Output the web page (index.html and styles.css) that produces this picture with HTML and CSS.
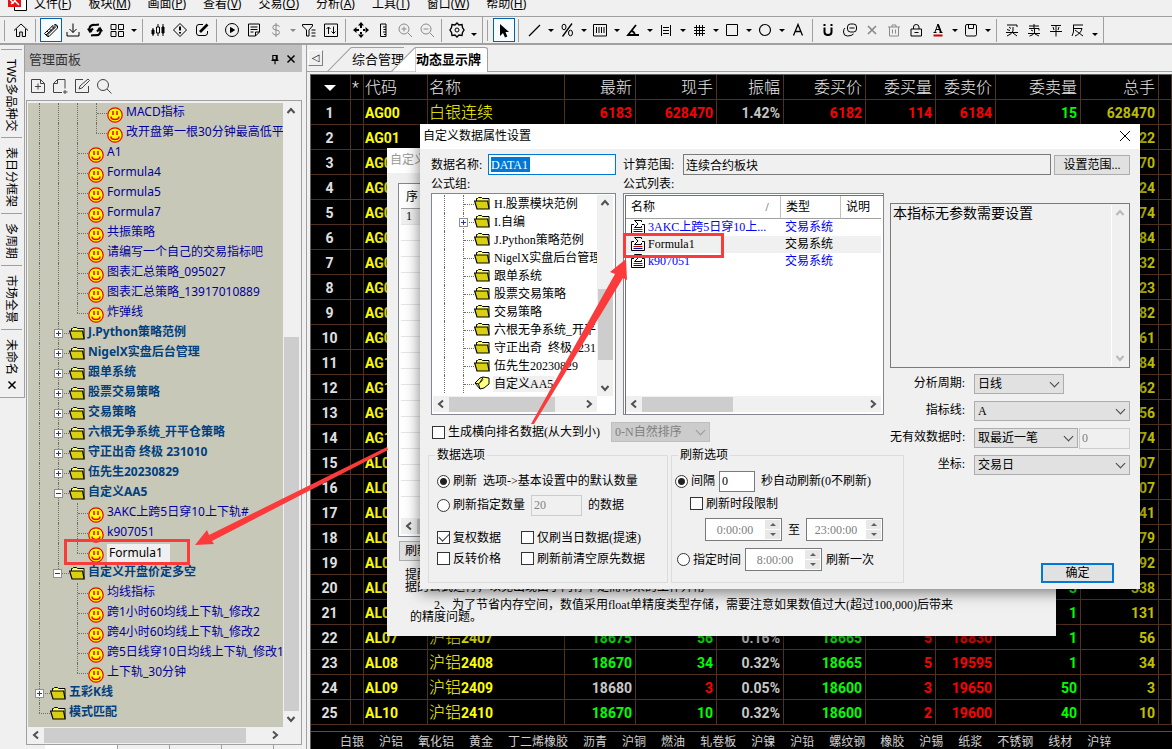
FILE: index.html
```html
<!DOCTYPE html>
<html lang="zh-CN">
<head>
    <meta charset="UTF-8">
    <meta name="viewport" content="width=device-width, initial-scale=1.0">
    <title>动态显示牌</title>
    <link rel="stylesheet" href="styles.css">
</head>
<body>
    <!-- Icon sprite -->
    <svg class="sprite" xmlns="http://www.w3.org/2000/svg">
        <symbol id="home" viewBox="0 0 16 16"><path d="M1 8.500 8 2l7 6.500M3.500 7v7.500h3.200V10h2.600v4.500h3.200V7"/></symbol>
        <symbol id="link" viewBox="0 0 16 16"><path d="M1.500 11.500 10 3.500l1.500 1.500L3 13zM5 14.500V12.500L13 4.500V2.500L14.500 4v2L6 14.500zM3 13l2 1.500M11 3l2-.5M4 9l2 2M6.500 7l2 2M9 4.500l2 2"/></symbol>
        <symbol id="download" viewBox="0 0 16 16"><path d="M8 1.500v9M4.500 7 8 10.500 11.500 7M2 10v4h12v-4"/></symbol>
        <symbol id="refresh" viewBox="0 0 16 16"><path stroke-width="2.200" d="M8 3C4 2 2 5 2.500 8L5 9.500M1 6.500l2 3 3-3M8 13c4 1 6-2 5.500-5L11 6.500M15 9.500l-2-3-3 3M8 3l4-.5M8 13l-4 .5"/></symbol>
        <symbol id="grid" viewBox="0 0 16 16"><path d="M2 2.500h5v5H2zM9.500 2.500h5v5h-5zM2 9.500h5v5H2zM9.500 9.500h5v5h-5z"/></symbol>
        <symbol id="candles" viewBox="0 0 16 16"><path d="M3 6v8M8 2v12M13 2v12"/><path fill="currentColor" d="M2 8h2v4H2zM12 5h2v6h-2z"/><path fill="#f0f0f0" d="M6.500 5h3v6h-3z"/></symbol>
        <symbol id="alert" viewBox="0 0 16 16"><path d="M8 1.500 14.500 8 8 14.500 1.500 8z"/><path stroke-width="2" d="M8 4.500v4M8 10v1.500"/></symbol>
        <symbol id="edit" viewBox="0 0 16 16"><path d="M9 2.500H5Q2.500 2.500 2.500 5v6q0 2.500 2.500 2.500h6q2.500 0 2.500-2.500V9"/><path stroke-width="2.600" d="m6 10 7.500-7.500"/></symbol>
        <symbol id="play" viewBox="0 0 16 16"><circle cx="8" cy="8" r="6.500"/><path fill="currentColor" d="m6.500 5.500 4 2.500-4 2.500z"/></symbol>
        <symbol id="note" viewBox="0 0 16 16"><path d="M2.500 2h11v8l-4 4h-7zM13.500 10h-4v4M4.500 5h7M4.500 7.500h7M4.500 10h3"/></symbol>
        <symbol id="dollar" viewBox="0 0 16 16"><path d="M8 1v14M11.500 5Q11 3 8 3 4.800 3 4.800 5.300 4.800 8 8 8q3.500 0 3.500 2.500T8 13q-3.200 0-3.500-2.500"/></symbol>
        <symbol id="filter" viewBox="0 0 16 16"><path d="M1.500 2.500h10v1.500L8 8v6H5.500V8l-4-4zM10.500 8h4M10.500 11h4M10.500 14h4"/></symbol>
        <symbol id="swap" viewBox="0 0 16 16"><path d="M1.500 2h13v12.500h-13zM5.500 12V5M3.500 7l2-2 2 2M10.500 4.500v7M8.500 9.500l2 2 2-2"/></symbol>
        <symbol id="move" viewBox="0 0 16 16"><path fill="currentColor" stroke="none" d="m8 0 3 3.500H5zM8 16l3-3.500H5zM0 8l3.500-3v6zM16 8l-3.500-3v6zM7 3h2v3H7zM7 10h2v3H7zM3 7h3v2H3zM10 7h3v2h-3z"/></symbol>
        <symbol id="ruler" viewBox="0 0 16 16"><path d="M5.500 2h5.500v12.500H5.500zM11 5H8M11 7.500H8.500M11 10H8M11 12.500H9"/></symbol>
        <symbol id="zoomin" viewBox="0 0 16 16"><circle cx="7" cy="7" r="5"/><path d="m11 11 4 4M4.500 7h5M7 4.500v5"/></symbol>
        <symbol id="zoomout" viewBox="0 0 16 16"><circle cx="7" cy="7" r="5"/><path d="m11 11 4 4M4.500 7h5"/></symbol>
        <symbol id="gear" viewBox="0 0 16 16"><path stroke-width="1.400" d="m8 1 2 2 3-.5.5 3L15 8l-1.500 2.500-.5 3-3-.5-2 2-2-2-3 .5-.5-3L1 8l1.500-2.500.5-3 3 .5z"/><circle cx="8" cy="8" r="2"/></symbol>
        <symbol id="cursor" viewBox="0 0 16 16"><path fill="currentColor" stroke="none" d="M4 2v12l3-3 2 4.500 2.300-1L9.500 10H13z"/></symbol>
        <symbol id="line" viewBox="0 0 16 16"><path stroke-width="1.300" d="M3 14 14 3"/></symbol>
        <symbol id="percent" viewBox="0 0 16 16"><path stroke-width="1.300" d="M3.500 14.500 13 1.500"/><ellipse cx="5" cy="5" rx="2" ry="2.800"/><ellipse cx="11.500" cy="11" rx="2" ry="2.800"/></symbol>
        <symbol id="bars" viewBox="0 0 16 16"><path d="M1.500 2.500h13v11.500h-13zM4.500 5v6M7 5v6M9.500 5v6M12 5v6"/></symbol>
        <symbol id="angle" viewBox="0 0 16 16"><path stroke-width="1.800" d="M11 3 3 13h11M6 9q3 0 4 4"/></symbol>
        <symbol id="spread" viewBox="0 0 16 16"><path d="M3.500 3v11M12.500 3v11M5 5.500h6M5 8.500h6M5 11.500h6"/></symbol>
        <symbol id="hash" viewBox="0 0 16 16"><path d="M5.500 3v11M8.500 3v11M11.500 3v11M3 5.500h11M3 8.500h11M3 11.500h11"/></symbol>
        <symbol id="rect" viewBox="0 0 16 16"><path d="M2.500 2.500h11v11h-11z"/></symbol>
        <symbol id="circle" viewBox="0 0 16 16"><circle cx="8" cy="8" r="5.500" stroke-width="1.200"/></symbol>
        <symbol id="lettera" viewBox="0 0 16 16"><path stroke-width="1.300" d="M3.500 13.500 8 2.500l4.500 11M5 9.500h6"/></symbol>
        <symbol id="magnet" viewBox="0 0 16 16"><path stroke-width="2" d="M4.500 5.500V10q0 3 3.500 3t3.500-3V5.500M4.500 2v2M11.500 2v2"/></symbol>
        <symbol id="copy" viewBox="0 0 16 16"><rect x="5.500" y="2" width="9" height="8" rx="3"/><path d="M3 6q-1.500 1-1.500 4 0 4 4 4 4 0 6-2M7.500 6h5"/></symbol>
        <symbol id="cross" viewBox="0 0 16 16"><path stroke-width="1.700" d="m4 4 8 8M12 4l-8 8"/></symbol>
        <symbol id="trash" viewBox="0 0 16 16"><path d="M2 5h12M6 5V3h4v2M3.500 5v9h9V5M6.500 7.500v4M9.500 7.500v4"/></symbol>
        <symbol id="lock" viewBox="0 0 16 16"><path d="M3 7h10.500v7H3zM5.500 7V5q0-2.500 2.700-2.500T11 5v2M6.500 10.500h4"/></symbol>
        <symbol id="fontcolor" viewBox="0 0 16 16"><path d="M5 10 8 2l3 8M6 7.500h4M3.500 10.500h3M9.500 10.500h3"/><path stroke-width="1.800" d="m8 2.500 3 8"/><path stroke="#d00000" stroke-width="2" d="M3.500 13.500h9"/></symbol>
        <symbol id="save" viewBox="0 0 16 16"><rect x="2.500" y="2.500" width="11" height="11.500" rx="1.500"/><path d="M5.500 3v3.500h5V3"/></symbol>
        <symbol id="buy" viewBox="0 0 16 16"><path d="M3 3h10v2M5 5l2 1.500M3 7.500l3 1M2 10.500h12M9 5v4q-1 3-6 5M9 11l4 3"/></symbol>
        <symbol id="sell" viewBox="0 0 16 16"><path d="M3 4h10M8 2v4M3 6.500h10v2M5 8l2 1M2 11.500h12M8.500 7v4q-1 2-5 3M9 12l4 2"/></symbol>
        <symbol id="even" viewBox="0 0 16 16"><path d="M3 3.500h10M5 5l1 3M11 5l-1 3M2 9.500h12M8 3.500v11"/></symbol>
        <symbol id="reverse" viewBox="0 0 16 16"><path d="M3 3h10M3.500 3v7L2 14M4 6.500h8q-1 5-7 7.500M5 8l8 6"/></symbol>
        <symbol id="newfile" viewBox="0 0 16 16"><path d="M1.500 1.500h9l4 4v9h-13zM10.500 1.500v4h4M8 5.500v6M5 8.500h6"/></symbol>
        <symbol id="addfile" viewBox="0 0 16 16"><path d="M10 14.500H1.500v-9l4-4H13v9M5.500 1.500v4h-4M13 12v4M11 14h4.500"/></symbol>
        <symbol id="editfile" viewBox="0 0 16 16"><path d="M9 1.500H1.500v13h13V8M5 11l1-3 8-7 1.500 1.500L8 10z"/></symbol>
        <symbol id="search" viewBox="0 0 16 16"><circle cx="7" cy="7" r="5.500"/><path d="m11 11 4.500 4.500"/></symbol>
        <symbol id="pin" viewBox="0 0 16 16"><path stroke-width="1.300" d="M5.500 4h5v5h-5zM4 9.500h8M8 10v4M9.500 4v5"/></symbol>
        <symbol id="chev" viewBox="0 0 16 16"><path d="m4.500 10 3.500-4 3.500 4"/></symbol>
        <symbol id="smile" viewBox="0 0 16 16"><circle cx="8" cy="8" r="7.200" fill="#ffff00" stroke="#f00000" stroke-width="1.200"/><path stroke="#f00000" stroke-width="1.500" d="M6 4v4M10 4v4M4 9.500q0 3 4 3t4-3"/></symbol>
        <symbol id="folder" viewBox="0 0 16 16"><path fill="#ffff66" stroke="#000" d="M2.500 6V3.500h1l1-1h3l1 1h6.500v10"/><path fill="#d8d010" stroke="#000" stroke-width="1.200" d="M.6 6h13l1.500 8H3z"/></symbol>
        <symbol id="folderopen" viewBox="0 0 16 16"><path fill="#ffff80" stroke="#000" d="M1 8 6 3l3-1 6 1v6l-5 4-4 1zM6 14 4.500 9 9 4.500M4.500 9 1 8M9 2.500l-3 5"/></symbol>
        <symbol id="sigma" viewBox="0 0 16 16"><path fill="#fff" stroke="#000" d="M4 5.500H1.500v9h13v-9H12"/><path stroke="#000" d="M11.500 3V1.500h-7L8 5 4.500 8.500h7V7"/><path stroke="#c00000" d="M3.500 10.500h9"/><path stroke="#0000a0" d="M3.500 12.500h9"/></symbol>
    </svg>

    <div class="app">
        <nav class="menubar">
            <svg class="app-logo" viewBox="0 0 20 12"><path fill="#fff" stroke="#000" d="M6.500-2h12v12.500h-12z"/><path fill="#e81010" d="M0-3h13v10H0z"/><path stroke="#fff" stroke-width="1.500" d="m2-1 3 4 3-4M3 4l4-3 4 4"/></svg>
            <a href="#">文件(<u>F</u>)</a>
            <a href="#">板块(<u>M</u>)</a>
            <a href="#">画面(<u>P</u>)</a>
            <a href="#">查看(<u>V</u>)</a>
            <a href="#">交易(<u>O</u>)</a>
            <a href="#">分析(<u>A</u>)</a>
            <a href="#">工具(<u>T</u>)</a>
            <a href="#">窗口(<u>W</u>)</a>
            <a href="#">帮助(<u>H</u>)</a>
        </nav>

        <div class="toolbars">
            <div class="toolbar" id="toolbarMain"></div>
            <div class="toolbar" id="toolbarDraw"></div>
        </div>

        <div class="workspace">
            <aside class="side-tabs">
                <a href="#">TWS多品种交</a>
                <a href="#">表日分框架</a>
                <a href="#">多周期</a>
                <a href="#">市场全景</a>
                <a href="#">未命名</a>
                <button class="side-close" aria-label="关闭"><svg><use href="#cross"/></svg></button>
            </aside>

            <section class="panel">
                <header class="panel-head">
                    <span>管理面板</span>
                    <button aria-label="固定"><svg><use href="#pin"/></svg></button>
                    <button aria-label="关闭"><svg><use href="#cross"/></svg></button>
                </header>
                <div class="panel-tools">
                    <button aria-label="新建"><svg><use href="#newfile"/></svg></button>
                    <button aria-label="添加"><svg><use href="#addfile"/></svg></button>
                    <button aria-label="编辑"><svg><use href="#editfile"/></svg></button>
                    <button aria-label="查找"><svg><use href="#search"/></svg></button>
                </div>
                <div class="scroll-frame panel-frame">
                    <div class="tree" id="tree"></div>
                    <div class="vbar"><svg><use href="#chev"/></svg><i class="thumb"></i><svg class="down"><use href="#chev"/></svg></div>
                    <div class="hbar"><svg class="left"><use href="#chev"/></svg><i class="thumb"></i><svg class="right"><use href="#chev"/></svg></div>
                </div>
                <div class="panel-tabs"><i class="on"></i><i></i><i></i><i></i></div>
            </section>

            <main class="mdi">
                <div class="mdi-tabs">
                    <button class="tab-prev" aria-label="向左"></button>
                    <a href="#" class="tab">
                        <svg viewBox="0 0 24 24" preserveAspectRatio="none"><path d="M0 24 22 1.500q1-1 2-1"/></svg>
                        <span>综合管理</span>
                    </a>
                    <a href="#" class="tab active">
                        <svg viewBox="0 0 24 24" preserveAspectRatio="none"><path d="M0 24 22 1.500q1-1 2-1V24z"/></svg>
                        <span>动态显示牌</span>
                    </a>
                </div>
                <div class="board">
                    <table class="quotes">
                        <colgroup>
                            <col class="c-no"><col class="c-star"><col class="c-code"><col class="c-name"><col class="c-last"><col class="c-vol"><col class="c-amp">
                            <col class="c-bid"><col class="c-bidv"><col class="c-ask"><col class="c-askv"><col class="c-total"><col>
                        </colgroup>
                        <thead>
                            <tr><th><i class="sort"></i></th><th class="l">*</th><th class="l">代码</th><th class="l">名称</th><th>最新</th><th>现手</th><th>振幅</th><th>委买价</th><th>委买量</th><th>委卖价</th><th>委卖量</th><th>总手</th><th></th></tr>
                        </thead>
                        <tbody id="quotes"></tbody>
                    </table>
                    <div class="ticker">
                        <a href="#">白银</a><a href="#">沪铝</a><a href="#">氧化铝</a><a href="#">黄金</a><a href="#">丁二烯橡胶</a><a href="#">沥青</a><a href="#">沪铜</a><a href="#">燃油</a><a href="#">轧卷板</a><a href="#">沪镍</a><a href="#">沪铅</a><a href="#">螺纹钢</a><a href="#">橡胶</a><a href="#">沪锡</a><a href="#">纸浆</a><a href="#">不锈钢</a><a href="#">线材</a><a href="#">沪锌</a>
                    </div>
                </div>
            </main>
        </div>
    </div>

    <!-- Parent dialog -->
    <section class="window window-back">
        <header class="window-title">自定义</header>
        <div class="window-body">
            <div class="rows-box">
                <table>
                    <thead><tr><th>序</th><th></th></tr></thead>
                    <tbody id="backRows"></tbody>
                </table>
                <div class="hbar"><svg class="left"><use href="#chev"/></svg><i class="thumb"></i></div>
            </div>
            <button class="btn btn-refresh">刷新</button>
            <p class="tip">提醒：</p>
            <p class="tip">据的公式运行，以免出现由于内存不足而带来的工作异常</p>
            <p class="tip tip-second">2、为了节省内存空间，数值采用float单精度类型存储，需要注意如果数值过大(超过100,000)后带来的精度问题。</p>
        </div>
    </section>

    <!-- Data property dialog -->
    <section class="window window-front">
        <header class="window-title">
            <span>自定义数据属性设置</span>
            <button class="window-close" aria-label="关闭"><svg viewBox="0 0 12 12"><path d="m1 1 10 10M11 1 1 11"/></svg></button>
        </header>
        <form class="window-body" onsubmit="return false">
            <div class="name-row">
                <label for="dataName">数据名称:</label>
                <div class="name-field"><input id="dataName" type="text" value="DATA1" size="5"></div>
                <label for="range">计算范围:</label>
                <input id="range" class="range" type="text" value="连续合约板块" readonly>
                <button class="btn" type="button">设置范围...</button>
            </div>

            <div class="columns">
                <div class="col-left">
                    <div class="lists">
                        <div class="group-col">
                            <h4>公式组:</h4>
                            <div class="scroll-frame group-box">
                                <div class="tree small" id="groups"></div>
                                <div class="vbar"><svg><use href="#chev"/></svg><i class="thumb"></i><svg class="down"><use href="#chev"/></svg></div>
                                <div class="hbar"><svg class="left"><use href="#chev"/></svg><i class="thumb"></i><svg class="right"><use href="#chev"/></svg></div>
                            </div>
                        </div>
                        <div class="formula-col">
                            <h4>公式列表:</h4>
                            <div class="formula-box">
                                <table>
                                    <thead><tr><th class="f-name">名称<i>/</i></th><th class="f-type">类型</th><th>说明</th></tr></thead>
                                    <tbody>
                                        <tr><td><svg><use href="#sigma"/></svg>3AKC上跨5日穿10上...</td><td>交易系统</td><td></td></tr>
                                        <tr class="sel"><td><svg><use href="#sigma"/></svg>Formula1</td><td>交易系统</td><td></td></tr>
                                        <tr><td><svg><use href="#sigma"/></svg>k907051</td><td>交易系统</td><td></td></tr>
                                    </tbody>
                                </table>
                                <div class="hbar"><svg class="left"><use href="#chev"/></svg><i class="thumb"></i><svg class="right"><use href="#chev"/></svg></div>
                            </div>
                        </div>
                    </div>

                    <div class="rank-row">
                        <label><input type="checkbox">生成横向排名数据(从大到小)</label>
                        <span class="select off"><select disabled aria-label="排序"><option>0-N自然排序</option></select></span>
                    </div>

                    <div class="groups">
                        <fieldset class="data-opts">
                            <legend>数据选项</legend>
                            <div class="line"><label><input type="radio" name="amount" checked>刷新&nbsp; 选项-&gt;基本设置中的默认数量</label></div>
                            <div class="line">
                                <label><input type="radio" name="amount">刷新指定数量</label>
                                <input class="num" type="text" value="20" disabled aria-label="数量">
                                <span>的数据</span>
                            </div>
                            <div class="checks">
                                <label><input type="checkbox" checked>复权数据</label>
                                <label><input type="checkbox">仅刷当日数据(提速)</label>
                                <label><input type="checkbox">反转价格</label>
                                <label><input type="checkbox">刷新前清空原先数据</label>
                            </div>
                        </fieldset>
                        <fieldset class="refresh-opts">
                            <legend>刷新选项</legend>
                            <div class="line">
                                <label><input type="radio" name="when" checked>间隔</label>
                                <input class="sec" type="text" value="0" aria-label="秒">
                                <span>秒自动刷新(0不刷新)</span>
                            </div>
                            <div class="line limit"><label><input type="checkbox">刷新时段限制</label></div>
                            <div class="line times">
                                <span class="time"><input type="text" value="0:00:00" disabled aria-label="开始"><i></i></span>
                                <span>至</span>
                                <span class="time"><input type="text" value="23:00:00" disabled aria-label="结束"><i></i></span>
                            </div>
                            <div class="line at">
                                <label><input type="radio" name="when">指定时间</label>
                                <span class="time"><input type="text" value="8:00:00" disabled aria-label="时间"><i></i></span>
                                <span>刷新一次</span>
                            </div>
                        </fieldset>
                    </div>
                </div>

                <div class="col-right">
                    <div class="params">
                        <textarea readonly aria-label="参数">本指标无参数需要设置</textarea>
                        <div class="vbar"><svg><use href="#chev"/></svg><svg class="down"><use href="#chev"/></svg></div>
                    </div>
                    <div class="fields">
                        <label for="period">分析周期:</label>
                        <span class="select short"><select id="period"><option>日线</option></select></span>
                        <label for="plot">指标线:</label>
                        <span class="select"><select id="plot"><option>A</option></select></span>
                        <label for="empty">无有效数据时:</label>
                        <div class="pair">
                            <span class="select"><select id="empty"><option>取最近一笔</option></select></span>
                            <input class="num" type="text" value="0" disabled aria-label="缺省值">
                        </div>
                        <label for="axis">坐标:</label>
                        <span class="select"><select id="axis"><option>交易日</option></select></span>
                    </div>
                    <button class="btn btn-ok">确定</button>
                </div>
            </div>
        </form>
    </section>

    <!-- Markup arrows over the windows -->
    <svg class="marks" width="1172" height="749" viewBox="0 0 1172 749">
        <rect x="65.500" y="540.500" width="123" height="23"/>
        <rect x="624.500" y="234.500" width="98" height="22"/>
        <path d="M195 545 207 530 209 535 387 447 388 450 212 541 214 544z"/>
        <path d="M626 259 610 272 615 274 531 424 534 424 623 278 627 280z"/>
    </svg>

    <script>
        const svg = id => `<svg><use href="#${id}"/></svg>`;

        // '|' separator, 'v' drop-down caret, '*' pressed, '-' disabled
        function buildToolbar(id, items) {
            document.getElementById(id).innerHTML = items.map(item => {
                if (item === '|') return '<i class="sep"></i>';
                if (item === 'grip') return '<i class="grip"></i>';
                if (item === 'v') return '<button class="caret" aria-label="更多"></button>';
                if (item === 'more') return '<button class="caret low" aria-label="更多"></button>';
                const name = item.replace(/^[*-]/, '');
                const state = item[0] === '*' ? 'pressed' : item[0] === '-' ? 'dim' : '';
                return `<button class="tool ${state}" aria-label="${name}">${svg(name)}</button>`;
            }).join('');
        }

        buildToolbar('toolbarMain', ['grip', 'home', '|', '*link', 'download', 'refresh', 'grid', 'v', '|', 'candles', 'alert', 'edit', '|',
            'play', 'note', '-dollar', 'v', 'filter', 'swap', '|', 'move', 'ruler', '-zoomin', '-zoomout', '|', 'gear', 'more']);
        buildToolbar('toolbarDraw', ['grip', '*cursor', '|', 'line', 'v', 'percent', 'v', 'bars', 'v', 'angle', 'v', 'spread', 'v', 'hash', 'v',
            'rect', 'v', 'circle', 'v', 'lettera', '|', 'magnet', 'copy', '-cross', '-trash', 'lock', 'fontcolor', 'v', 'save', 'v', '|',
            'buy', 'sell', 'even', 'reverse', 'more']);

        // Guides: '|' line, '.' blank, 'T' branch, 'L' last branch, '+' closed box, '-' open box, 'm' open box on the last branch
        const guideClass = { '|': 'bar', '.': '', T: 'tee', L: 'end', '+': 'tee', '-': 'tee', m: 'end' };

        function buildTree(id, rows) {
            document.getElementById(id).innerHTML = rows.map(([guides, icon, text, selected]) => {
                const cells = [...guides].map(g => {
                    const box = '+-m'.includes(g) ? `<b class="${g === '+' ? 'plus' : ''}"></b>` : '';
                    return `<i class="${guideClass[g]}">${box}</i>`;
                }).join('');
                return `<div class="node ${icon}${selected ? ' sel' : ''}">${cells}${svg(icon)}<span>${text}</span></div>`;
            }).join('');
        }

        buildTree('tree', [
            ['|||T', 'smile', 'MACD指标'],
            ['|||L', 'smile', '改开盘第一根30分钟最高低平'],
            ['||T', 'smile', 'A1'],
            ['||T', 'smile', 'Formula4'],
            ['||T', 'smile', 'Formula5'],
            ['||T', 'smile', 'Formula7'],
            ['||T', 'smile', '共振策略'],
            ['||T', 'smile', '请编写一个自己的交易指标吧'],
            ['||T', 'smile', '图表汇总策略_095027'],
            ['||T', 'smile', '图表汇总策略_13917010889'],
            ['||L', 'smile', '炸弹线'],
            ['|+', 'folder', 'J.Python策略范例'],
            ['|+', 'folder', 'NigelX实盘后台管理'],
            ['|+', 'folder', '跟单系统'],
            ['|+', 'folder', '股票交易策略'],
            ['|+', 'folder', '交易策略'],
            ['|+', 'folder', '六根无争系统_开平仓策略'],
            ['|+', 'folder', '守正出奇 终极 231010'],
            ['|+', 'folder', '伍先生20230829'],
            ['|-', 'folder', '自定义AA5'],
            ['||T', 'smile', '3AKC上跨5日穿10上下轨#'],
            ['||T', 'smile', 'k907051'],
            ['||L', 'smile', 'Formula1', true],
            ['|m', 'folder', '自定义开盘价定多空'],
            ['|.T', 'smile', '均线指标'],
            ['|.T', 'smile', '跨1小时60均线上下轨_修改2'],
            ['|.T', 'smile', '跨4小时60均线上下轨_修改2'],
            ['|.T', 'smile', '跨5日线穿10日均线上下轨_修改1'],
            ['|.L', 'smile', '上下轨_30分钟'],
            ['+', 'folder', '五彩K线'],
            ['L', 'folder', '模式匹配']
        ]);

        buildTree('groups', [
            ['|T', 'folder', 'H.股票模块范例'],
            ['|+', 'folder', 'I.自编'],
            ['|T', 'folder', 'J.Python策略范例'],
            ['|T', 'folder', 'NigelX实盘后台管理'],
            ['|T', 'folder', '跟单系统'],
            ['|T', 'folder', '股票交易策略'],
            ['|T', 'folder', '交易策略'],
            ['|T', 'folder', '六根无争系统_开平'],
            ['|T', 'folder', '守正出奇&nbsp; 终极&nbsp; 231'],
            ['|T', 'folder', '伍先生20230829'],
            ['|T', 'folderopen', '自定义AA5', true]
        ]);

        // code, name, then cells as [value, colour class]
        const quotes = [
            ['AG00', '白银连续', ['6183', 'up'], ['628470', 'up'], ['1.42%', ''], ['6182', 'up'], ['114', 'up'], ['6184', 'up'], ['15', 'dn'], '628470'],
            ['AG01', '', 22], ['AG02', '', 70], ['AG03', '', 24], ['AG04', '', 74], ['AG05', '', 84], ['AG06', '', 32],
            ['AG07', '', 23], ['AG08', '', 82], ['AG09', '', 61], ['AG10', '', 84], ['AG11', '', 62], ['AG12', '', 56],
            ['AG13', '', 74], ['AL00', '', '07'], ['AL01', '', '07'], ['AL02', '', 41], ['AL03', '', 79], ['AL04', '', 92],
            ['AL05', '', , , , , , , ['3', 'dn'], '338'],
            ['AL06', '', , , , , , , ['1', 'dn'], '131'],
            ['AL07', '沪铝<b>2407</b>', ['18675', 'dn'], ['56', 'dn'], ['0.16%', ''], ['18665', 'dn'], ['5', 'up'], ['18830', 'up'], ['1', 'dn'], '56'],
            ['AL08', '沪铝<b>2408</b>', ['18670', 'dn'], ['34', 'dn'], ['0.32%', ''], ['18665', 'dn'], ['5', 'up'], ['19595', 'up'], ['1', 'dn'], '34'],
            ['AL09', '沪铝<b>2409</b>', ['18680', ''], ['3', 'up'], ['0.05%', ''], ['18600', 'dn'], ['3', 'up'], ['19650', 'up'], ['50', 'dn'], '3'],
            ['AL10', '沪铝<b>2410</b>', ['18670', 'dn'], ['10', 'dn'], ['0.32%', ''], ['18600', 'dn'], ['2', 'up'], ['19600', 'up'], ['40', 'dn'], '10']
        ];

        document.getElementById('quotes').innerHTML = quotes.map((q, i) => {
            const total = q[q.length - 1];
            let cells = '';
            for (let c = 2; c < 9; c++) {
                const v = Array.isArray(q[c]) ? q[c] : ['', ''];
                cells += `<td class="${v[1]}">${v[0]}</td>`;
            }
            return `<tr><td class="no">${i + 1}</td><td></td><td class="code">${q[0]}</td><td class="name">${q[1]}</td>${cells}<td class="total">${total}</td><td></td></tr>`;
        }).join('');

        document.getElementById('backRows').innerHTML =
            '<tr class="first"><td>1</td><td></td></tr>' + '<tr><td></td><td></td></tr>'.repeat(17);

        document.getElementById('dataName').select();
    </script>
</body>
</html>
```
FILE: styles.css
```css
:root {
    --face: #f0f0f0;
    --line: #a0a0a0;
    --accent: #0078d7;
    --grid: #52301f;
    --ui: "Noto Sans", "Noto Sans CJK SC", sans-serif;
    --song: "Liberation Serif", "Noto Sans CJK SC", serif;
}

* {
    margin: 0;
    padding: 0;
    box-sizing: border-box;
}

body {
    height: 100vh;
    overflow: hidden;
    position: relative;
    background: var(--face);
    font: 12px/16px var(--ui);
    color: #000;
}

a {
    color: inherit;
    text-decoration: none;
}

button {
    font: inherit;
    color: inherit;
    background: none;
    border: none;
}

input, select, textarea {
    font: inherit;
    color: inherit;
    border-radius: 0;
}

i {
    font-style: normal;
}

svg {
    width: 16px;
    height: 16px;
    fill: none;
    stroke: currentColor;
    display: block;
    flex: none;
}

.sprite {
    position: absolute;
    width: 0;
    height: 0;
}

.app {
    display: flex;
    flex-direction: column;
    height: 100vh;
}

/* Menu */
.menubar {
    display: flex;
    gap: 17px;
    height: 25px;
    margin-top: -8px;
    padding-left: 8px;
    line-height: 24px;
    border-bottom: 1px solid var(--line);
}

.menubar a {
    white-space: nowrap;
}

.app-logo {
    width: 20px;
    height: 12px;
    margin: 8px -11px 0 0;
    stroke: none;
}

/* Toolbars */
.toolbars {
    display: flex;
    height: 28px;
    border-bottom: 2px solid var(--line);
}

.toolbar {
    display: flex;
    align-items: center;
    padding-right: 3px;
    border-right: 1px solid var(--line);
}

.tool {
    display: flex;
    align-items: center;
    justify-content: center;
    width: 22px;
    height: 24px;
}

.tool.pressed {
    border: 1px solid #0063b1;
    background: #f8fbfe;
}

.tool.dim {
    color: #8a8a8a;
}

.caret {
    width: 11px;
    height: 24px;
    display: flex;
    align-items: center;
    justify-content: center;
}

.caret::after {
    content: "";
    border: 3px solid transparent;
    border-top-color: #000;
    border-bottom: none;
}

.tool.dim + .caret::after {
    border-top-color: #8a8a8a;
}

.caret.low {
    align-items: flex-end;
    padding-bottom: 6px;
}

.sep {
    width: 8px;
    height: 23px;
    background: linear-gradient(var(--line), var(--line)) 3px 0 / 1px 100% no-repeat;
}

.grip {
    width: 10px;
    height: 21px;
    background: linear-gradient(var(--line), var(--line)) 4px 0 / 1px 100% no-repeat;
}

.workspace {
    flex: 1;
    display: flex;
    min-height: 0;
}

/* Vertical page tabs */
.side-tabs {
    width: 25px;
    align-self: flex-start;
    border-right: 1px solid var(--line);
    border-bottom: 1px solid var(--line);
    padding: 4px 2px 4px 1px;
    display: flex;
    flex-direction: column;
}

.side-tabs a {
    writing-mode: vertical-rl;
    text-orientation: sideways;
    line-height: 21px;
    padding: 9px 0 6px;
    border-top: 1px solid var(--line);
}

.side-tabs a:last-of-type {
    padding-bottom: 2px;
}

.side-close {
    align-self: center;
}

.side-close svg {
    width: 14px;
}

/* Management panel */
.panel {
    width: 277px;
    display: flex;
    flex-direction: column;
    flex: none;
}

.panel-head {
    display: flex;
    align-items: center;
    height: 27px;
    padding: 0 2px 0 4px;
    background: #c0c0c0;
    color: #333;
    font-size: 13px;
}

.panel-head span {
    flex: 1;
}

.panel-head button {
    width: 16px;
    color: #000;
}

.panel-head svg {
    width: 14px;
    height: 14px;
}

.panel-tools {
    display: flex;
    gap: 6px;
    height: 28px;
    align-items: center;
    padding-left: 5px;
    color: #444;
}

.scroll-frame {
    display: grid;
    grid-template-columns: minmax(0, 1fr) 16px;
    grid-template-rows: minmax(0, 1fr) 16px;
}

.panel-frame {
    flex: 1;
    min-height: 0;
    margin: 0 0 0 1px;
    border: 1px solid var(--line);
    padding: 2px 2px 1px 1px;
}

.tree {
    background: #c8c8b8;
    color: #0000a0;
    overflow: hidden;
    padding-left: 11px;
}

.node {
    display: flex;
    align-items: center;
    height: 20px;
    white-space: nowrap;
}

.node > i {
    position: relative;
    flex: none;
    width: 19px;
    height: 100%;
}

.node > i:last-of-type {
    width: 11px;
}

.node > i.bar, .node > i.tee {
    border-left: 1px dotted #707068;
}

.node > i.end::before {
    content: "";
    position: absolute;
    left: 0;
    top: 0;
    height: 50%;
    border-left: 1px dotted #707068;
}

.node > i.tee::after, .node > i.end::after {
    content: "";
    position: absolute;
    left: 0;
    right: 0;
    top: 50%;
    border-top: 1px dotted #707068;
}

.node b {
    position: absolute;
    z-index: 1;
    left: -5px;
    top: 6px;
    width: 9px;
    height: 9px;
    border: 1px solid #909090;
    background: linear-gradient(#204080, #204080) 1px 3px / 5px 1px no-repeat, #fff;
}

.node b.plus {
    background: linear-gradient(#204080, #204080) 1px 3px / 5px 1px no-repeat,
        linear-gradient(#204080, #204080) 3px 1px / 1px 5px no-repeat, #fff;
}

.node svg {
    margin-right: 3px;
}

.node.smile svg {
    margin-top: 3px;
}

.node span {
    line-height: 18px;
}

.tree:not(.small) .node span {
    margin-bottom: 3px;
}

.tree:not(.small) .folder span {
    color: #004080;
    font-weight: bold;
}

.tree:not(.small) .sel span {
    color: #000;
    background: var(--face);
    padding: 0 7px 0 2px;
    margin-bottom: 0;
}

.vbar, .hbar {
    display: flex;
    align-items: center;
    background: var(--face);
    color: #505050;
    min-width: 0;
}

.vbar {
    flex-direction: column;
}

.vbar svg, .hbar svg {
    stroke-width: 2;
}

.vbar .down {
    transform: rotate(180deg);
    margin-top: auto;
}

.hbar .left {
    transform: rotate(-90deg);
}

.hbar .right {
    transform: rotate(90deg);
    margin-left: auto;
}

.thumb {
    background: #cdcdcd;
}

.vbar .thumb {
    width: 15px;
}

.hbar .thumb {
    height: 15px;
}

.panel-frame .vbar .thumb {
    height: 60%;
    margin-top: auto;
}

.panel-frame .vbar .down {
    margin-top: 0;
}

.panel-frame .hbar .thumb {
    width: 202px;
}

.panel-tabs {
    display: flex;
    height: 4px;
    padding-left: 20px;
}

.panel-tabs i {
    width: 52px;
    border-right: 1px solid var(--line);
}

.panel-tabs .on {
    width: 73px;
    background: #fff;
}

/* Quote area */
.mdi {
    flex: 1;
    min-width: 0;
    margin-left: 4px;
    border-left: 1px solid var(--line);
    display: flex;
    flex-direction: column;
}

.mdi-tabs {
    display: flex;
    height: 27px;
    padding-top: 2px;
    border-bottom: 1px solid var(--line);
    font-size: 13px;
    line-height: 23px;
}

.tab-prev {
    width: 15px;
    height: 16px;
    margin: 3px 4px 0 1px;
    border: 1px solid;
    border-color: #fff #808080 #808080 #fff;
    display: flex;
    align-items: center;
    justify-content: center;
}

.tab-prev::after {
    content: "◁";
    font: 10px/12px "DejaVu Sans", sans-serif;
}

.tab {
    display: flex;
    height: 25px;
}

.tab svg {
    width: 25px;
    height: 25px;
    stroke: var(--line);
}

.tab span {
    border-top: 1px solid var(--line);
}

.tab.active {
    margin-left: -13px;
    font-weight: bold;
}

.tab.active svg {
    fill: #fff;
}

.tab.active span {
    background: #fff;
    border-right: 1px solid var(--line);
    border-radius: 0 3px 0 0;
    padding-right: 6px;
}

.board {
    flex: 1;
    min-height: 0;
    margin: 2px 0 0 3px;
    border-top: 1px solid #606060;
    border-left: 1px solid #606060;
    background: #000;
    display: flex;
    flex-direction: column;
    overflow: hidden;
}

.quotes {
    width: 100%;
    table-layout: fixed;
    border-collapse: separate;
    border-spacing: 0;
    color: #c8c8c8;
    font: bold 14px/20px Roboto, "Noto Sans CJK SC", sans-serif;
}

.quotes th, .quotes td {
    height: 25px;
    padding: 1px 3px 0 1px;
    text-align: right;
    white-space: nowrap;
    overflow: hidden;
    border-right: 1px solid var(--grid);
    border-bottom: 1px solid var(--grid);
}

.quotes th {
    font-size: 16px;
    font-weight: 300;
    color: #e8e8e8;
}

.quotes th.l {
    text-align: left;
}

.quotes .no {
    text-align: center;
    color: #e0e0e0;
}

.quotes .code, .quotes .name {
    text-align: left;
    color: #ff0;
}

.quotes .name {
    font-size: 16px;
    font-weight: 300;
}

.quotes .name b {
    font-size: 14px;
    font-weight: bold;
}

.quotes .up { color: #f00; }
.quotes .dn { color: #0f0; }
.quotes .total { color: #c0c000; }

.c-no { width: 40px; }
.c-star { width: 13px; }
.c-code { width: 64px; }
.c-name { width: 137px; }
.c-last { width: 71px; }
.c-vol { width: 81px; }
.c-amp { width: 67px; }
.c-bid { width: 82px; }
.c-bidv { width: 70px; }
.c-ask { width: 60px; }
.c-askv { width: 85px; }
.c-total { width: 78px; }

.sort {
    display: block;
    margin: 0 auto;
    width: 0;
    border: 6px solid transparent;
    border-top-color: #fff;
    border-bottom: none;
}

.ticker {
    display: flex;
    gap: 15px;
    height: 18px;
    margin-top: auto;
    padding-left: 29px;
    border-top: 1px solid #505050;
    color: #d0d0d0;
    line-height: 19px;
    white-space: nowrap;
}

/* Dialog windows */
.window {
    position: absolute;
    background: var(--face);
    font-family: var(--song);
    box-shadow: 0 3px 14px rgba(0, 0, 0, 0.5);
    display: flex;
    flex-direction: column;
}

.window-back {
    left: 387px;
    top: 148px;
    width: 669px;
    height: 488px;
}

.window-front {
    left: 420px;
    top: 124px;
    width: 720px;
}

.window-title {
    display: flex;
    align-items: center;
    justify-content: space-between;
    height: 25px;
    padding: 0 9px 2px 3px;
    background: #fff;
    font-family: var(--ui);
}

.window-close svg {
    width: 12px;
    height: 12px;
}

.btn {
    height: 20px;
    padding: 0 3px;
    background: #e1e1e1;
    border: 1px solid #adadad;
    line-height: 16px;
    white-space: nowrap;
}

.window-back .window-title {
    color: #999;
}

.window-back .window-body {
    padding: 10px 11px;
}

.rows-box {
    height: 354px;
    padding: 2px;
    border: 1px solid #828790;
    background: #fff;
    display: flex;
    flex-direction: column;
}

.rows-box table {
    width: 100%;
    table-layout: fixed;
    border-spacing: 0;
}

.rows-box th, .rows-box td {
    height: 16px;
    padding-left: 5px;
    text-align: left;
    line-height: 15px;
    font-weight: normal;
    border-bottom: 1px solid #e6e6e6;
}

.rows-box th {
    height: 23px;
    border-bottom-color: #a0a0a0;
}

.rows-box th:first-child {
    width: 60px;
}

.rows-box .first td {
    background: var(--face);
}

.rows-box .hbar {
    margin-top: auto;
}

.rows-box .thumb {
    width: 300px;
}

.btn-refresh {
    display: block;
    margin: 4px 0 8px 1px;
    padding: 0 5px;
}

.tip {
    margin-left: 7px;
    line-height: 12px;
}

.tip-second {
    width: 550px;
    margin: 6px 0 0 12px;
    text-indent: 24px;
}

.window-front .window-body {
    padding: 5px 10px 6px 11px;
}

.name-row {
    display: flex;
    align-items: center;
    height: 21px;
}

.name-row label {
    width: 57px;
}

.name-row label + .range {
    margin-left: 3px;
}

.name-field {
    width: 128px;
    height: 21px;
    margin-right: 7px;
    padding: 2px;
    background: #fff;
    border: 1px solid var(--accent);
}

.name-field input {
    display: block;
    width: 39px;
    height: 15px;
    border: none;
    outline: none;
    color: #fff;
    background: var(--accent);
}

.name-field input::selection {
    color: #fff;
    background: var(--accent);
}

.range {
    flex: 1;
    min-width: 0;
    height: 21px;
    margin-right: 3px;
    padding: 0 2px;
    background: var(--face);
    border: 1px solid #7a7a7a;
}

.name-row .btn {
    width: 76px;
}

.columns {
    display: grid;
    grid-template-columns: 453px minmax(0, 1fr);
    gap: 6px;
}

.lists {
    display: grid;
    grid-template-columns: 185px minmax(0, 1fr);
    gap: 7px;
}

.lists h4 {
    font-weight: normal;
    line-height: 18px;
}

.group-box, .formula-box {
    height: 222px;
    background: #fff;
    border: 1px solid #828790;
    padding: 1px 2px 2px 1px;
}

.tree.small {
    background: #fff;
    color: #000;
}

.small .node {
    height: 18px;
}

.small .node b {
    top: 5px;
}

.small .node svg {
    margin-bottom: 2px;
}

.small .node span {
    line-height: 16px;
    padding: 0 1px;
}

.small .sel span {
    background: var(--face);
}

.group-box .thumb {
    margin-top: 78px;
    height: 71px;
}

.group-box .hbar .thumb {
    margin-top: 0;
    height: 15px;
    width: 106px;
}

.formula-box {
    padding: 2px;
    display: flex;
    flex-direction: column;
    box-shadow: inset 1px 1px #fff, inset 2px 2px #707070;
}

.formula-box table {
    width: 100%;
    table-layout: fixed;
    border-spacing: 0;
}

.formula-box th {
    height: 23px;
    padding-left: 5px;
    text-align: left;
    font: 12px/16px var(--ui);
    border-right: 1px solid #c0c0c0;
    border-bottom: 1px solid #a0a0a0;
}

.formula-box th:last-child {
    border-right: none;
}

.formula-box th i {
    float: right;
    margin-right: 11px;
    font-size: 10px;
    color: #888;
}

.f-name { width: 155px; }
.f-type { width: 60px; }

.formula-box td {
    height: 17px;
    padding-left: 4px;
    line-height: 17px;
    white-space: nowrap;
    color: #00f;
}

.formula-box td svg {
    float: left;
    margin-right: 2px;
}

.formula-box .sel td {
    background: var(--face);
    color: #000;
}

.formula-box .hbar {
    margin-top: auto;
}

.formula-box .thumb {
    width: 91px;
}

label {
    white-space: nowrap;
}

.rank-row {
    display: flex;
    align-items: center;
    height: 20px;
    margin-top: 7px;
    padding-left: 1px;
}

label:has(> input) {
    display: flex;
    align-items: center;
    gap: 3px;
}

input[type="checkbox"], input[type="radio"] {
    appearance: none;
    flex: none;
    width: 13px;
    height: 13px;
    background: #fff;
    border: 1px solid #333;
}

input[type="radio"] {
    border-radius: 50%;
}

input[type="radio"]:checked {
    background: radial-gradient(#222 0 3px, #fff 4px);
}

input[type="checkbox"]:checked::after {
    content: "";
    display: block;
    width: 9px;
    height: 5px;
    margin: 1px;
    border: solid #333;
    border-width: 0 0 1px 1px;
    transform: rotate(-45deg);
}

.select {
    position: relative;
    display: block;
}

.select select {
    appearance: none;
    display: block;
    width: 100%;
    height: 20px;
    padding: 0 3px;
    background: #e1e1e1;
    border: 1px solid #adadad;
}

.select::after {
    content: "";
    position: absolute;
    right: 6px;
    top: 5px;
    width: 6px;
    height: 6px;
    border: solid #444;
    border-width: 0 1px 1px 0;
    transform: rotate(45deg);
}

.select.off {
    width: 99px;
    margin-left: auto;
    margin-right: 174px;
}

.select.off select {
    opacity: 1;
    color: #808080;
    background: #ccc;
    border-color: #bfbfbf;
}

.select.off::after {
    border-color: #999;
}

.groups {
    display: flex;
    gap: 3px;
    margin: 7px -20px 0 -3px;
}

fieldset {
    height: 134px;
    min-width: 0;
    border: 1px solid #dcdcdc;
}

legend {
    line-height: 13px;
    padding: 0 2px;
    margin-left: 3px;
}

.data-opts {
    flex: 0 0 240px;
    padding: 7px 0 0 8px;
}

.data-opts legend {
    margin-left: -2px;
}

.refresh-opts {
    flex: 1;
    padding: 7px 0 0 3px;
}

.line {
    display: flex;
    align-items: center;
    height: 24px;
    gap: 6px;
    white-space: nowrap;
}

.num, .sec {
    width: 51px;
    height: 21px;
    padding: 0 2px;
    background: #fff;
    border: 1px solid #7a7a7a;
}

.num:disabled {
    color: #808080;
    background: var(--face);
    border-color: #ccc;
}

.sec {
    width: 36px;
    margin-left: -2px;
}

.checks {
    display: grid;
    grid-template-columns: 84px 1fr;
    grid-auto-rows: 21px;
    margin-top: 10px;
}

.limit {
    height: 21px;
    margin-left: 15px;
}

.times {
    height: 23px;
    margin: 4px 0 7px 30px;
}

.at {
    height: 23px;
    gap: 4px;
    margin-left: 2px;
}

.time {
    display: flex;
    width: 77px;
    height: 23px;
    padding: 1px;
    background: #fff;
    border: 1px solid #7a7a7a;
}

.time input {
    width: 56px;
    min-width: 0;
    border: none;
    background: none;
    color: #808080;
    text-align: center;
    font-size: 12px;
}

.time i {
    position: relative;
    width: 15px;
    margin: 0 0 0 auto;
    background: linear-gradient(#fff, #fff) 0 9px / 100% 1px no-repeat, #e8e8e8;
}

.time i::before, .time i::after {
    content: "";
    position: absolute;
    left: 5px;
    top: 3px;
    border: 3px solid transparent;
    border-top: none;
    border-bottom-color: #606060;
}

.time i::after {
    top: 13px;
    transform: rotate(180deg);
}

.col-right {
    display: flex;
    flex-direction: column;
}

.params {
    display: flex;
    height: 165px;
    margin: 28px 0 6px;
    border: 1px solid #7a7a7a;
    padding: 1px;
}

.params textarea {
    flex: 1;
    min-width: 0;
    padding: 1px;
    resize: none;
    border: none;
    border-right: 1px solid #fff;
    outline: none;
    background: var(--face);
    font-size: 14px;
    overflow: hidden;
}

.params .vbar {
    color: #b8b8b8;
}

.fields {
    display: grid;
    grid-template-columns: 75px minmax(0, 1fr);
    grid-auto-rows: 20px;
    gap: 7px 9px;
}

.fields label {
    text-align: right;
    line-height: 18px;
}

.short {
    width: 90px;
}

.pair {
    display: flex;
    gap: 1px;
}

.pair .select {
    flex: 1;
}

.btn-ok {
    width: 73px;
    margin: auto 16px 0 auto;
    border: 2px solid var(--accent);
}

/* Red markup */
.marks {
    position: absolute;
    left: 0;
    top: 0;
    width: 1172px;
    height: 749px;
    pointer-events: none;
}

.marks rect {
    stroke: #fb3b3b;
    stroke-width: 3;
}

.marks path {
    fill: #fb3b3b;
    stroke: none;
}
```
